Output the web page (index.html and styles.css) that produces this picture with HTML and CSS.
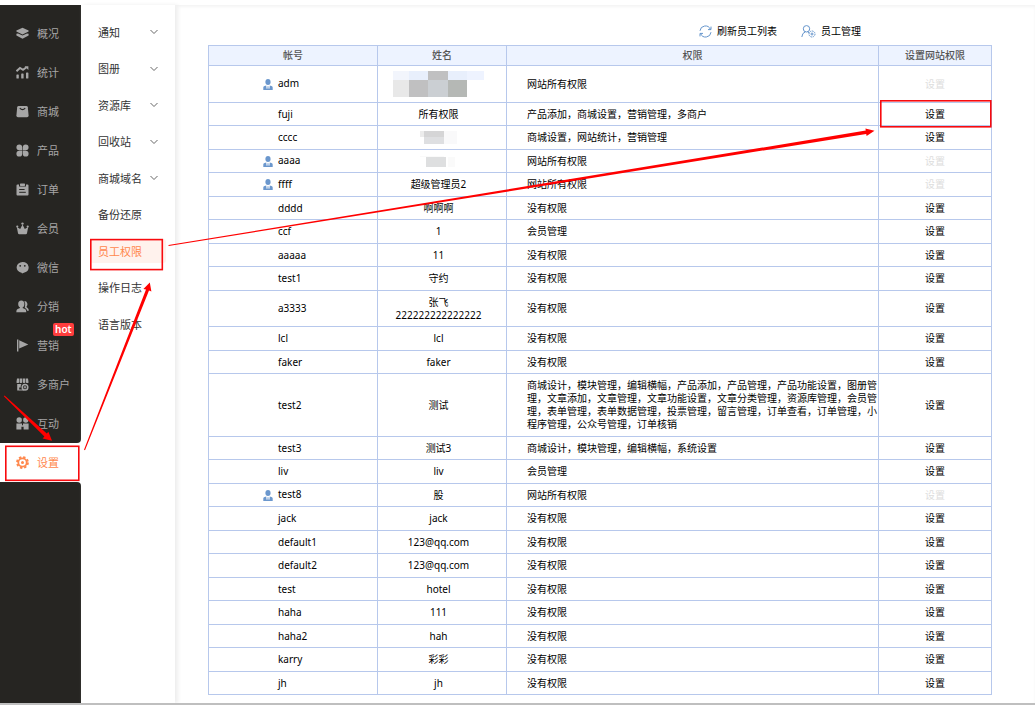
FILE: index.html
```html
<!DOCTYPE html>
<html lang="zh-CN">
<head>
<meta charset="utf-8">
<title>员工权限</title>
<link rel="stylesheet" href="styles.css">
</head>
<body>
<svg class="symbols" width="0" height="0" aria-hidden="true">
  <symbol id="staff" viewBox="0 0 10 12">
    <ellipse cx="5" cy="3" rx="2.6" ry="2.9"/>
    <path d="M0.3 11V8.4Q0.3 7.1 1.6 6.9L3.2 6.6L3.6 9.8H4.4L4.7 7H5.3L5.6 9.8H6.4L6.8 6.6L8.4 6.9Q9.7 7.1 9.7 8.4V11Z"/>
  </symbol>
  <symbol id="chevron" viewBox="0 0 8 6">
    <path d="M0.5 1L4 4.5L7.5 1" fill="none" stroke="#666" stroke-width="1"/>
  </symbol>
</svg>
<div class="top-edge"></div>
<div class="layout">
  <nav class="rail" aria-label="主菜单">
    <div class="rail-group">
      <a class="rail-item" href="#"><svg class="rail-icon" viewBox="0 0 13 13"><path d="M6.5 0.8L12.6 3.6V4.4L6.5 7.4L0.4 4.4V3.6Z"/><path d="M0.4 6.8L2 6.4L6.5 8.6L11 6.4L12.6 6.8V8.6L6.5 11.8L0.4 8.6Z"/></svg>概况</a>
      <a class="rail-item" href="#"><svg class="rail-icon" viewBox="0 0 13 13"><path d="M0.5 5.2L4 2L7 3.8L10.5 1.2" fill="none" stroke="#a6a6a6" stroke-width="1.9"/><path d="M8.6 0.3H12.4V4Z"/><rect x="0.4" y="8.4" width="2.4" height="4.2" rx="0.7"/><rect x="5.2" y="7.4" width="2.4" height="5.2" rx="0.7"/><rect x="10" y="6.4" width="2.4" height="6.2" rx="0.7"/></svg>统计</a>
      <a class="rail-item" href="#"><svg class="rail-icon" viewBox="0 0 13 13"><path d="M2.6 1H10.4Q11.6 1 11.8 2.2L12.6 10.5Q12.7 12.3 11 12.3H2Q0.3 12.3 0.4 10.5L1.2 2.2Q1.4 1 2.6 1Z"/><path d="M3.8 3.2Q6.5 6 9.2 3.2" fill="none" stroke="#262522" stroke-width="1.2"/></svg>商城</a>
      <a class="rail-item" href="#"><svg class="rail-icon" viewBox="0 0 13 13"><path d="M6.2 6.2V3.3A2.9 2.9 0 1 0 3.3 6.2ZM6.8 6.2H9.7A2.9 2.9 0 1 0 6.8 3.3ZM6.2 6.8H3.3A2.9 2.9 0 1 0 6.2 9.7ZM6.8 6.8V9.7A2.9 2.9 0 1 0 9.7 6.8Z"/></svg>产品</a>
      <a class="rail-item" href="#"><svg class="rail-icon" viewBox="0 0 13 13"><path d="M1.5 1.4H3V3.6H10V1.4H11.5Q12.5 1.4 12.5 2.4V11.5Q12.5 12.5 11.5 12.5H1.5Q0.5 12.5 0.5 11.5V2.4Q0.5 1.4 1.5 1.4Z"/><rect x="4" y="0.5" width="5" height="2.4" rx="0.6"/><path d="M3.2 6.5H8.6M3.2 9.3H9.8" stroke="#262522" stroke-width="1"/></svg>订单</a>
      <a class="rail-item" href="#"><svg class="rail-icon" viewBox="0 0 13 13"><circle cx="6.5" cy="1.6" r="1.2"/><circle cx="1.3" cy="4.6" r="1.1"/><circle cx="11.7" cy="4.6" r="1.1"/><path d="M0.8 5L4.2 7L6.5 2.4L8.8 7L12.2 5L11 11.2Q10.8 12.3 9.8 12.3H3.2Q2.2 12.3 2 11.2Z"/></svg>会员</a>
      <a class="rail-item" href="#"><svg class="rail-icon" viewBox="0 0 13 13"><path d="M6.5 0.9A6.1 5.5 0 0 1 8.5 11.6L6 12.4L5.6 11.8A6.1 5.5 0 0 1 6.5 0.9Z"/><circle cx="4.2" cy="4.8" r="0.9" fill="#262522"/><circle cx="8.8" cy="4.8" r="0.9" fill="#262522"/></svg>微信</a>
      <a class="rail-item" href="#"><svg class="rail-icon" viewBox="0 0 13 13"><ellipse cx="5.3" cy="4.1" rx="3.1" ry="3.6"/><path d="M4 6.5H6.6V8L9 9Q10.3 9.6 10.3 12.3H0.3Q0.3 9.6 1.6 9L4 8Z"/><path d="M8.4 1A3 3.4 0 0 1 10.4 7L11.6 8Q12.8 8.8 12.8 10.8H11.2Q10.8 8.7 8.8 7.8Q10 4.2 8.4 1Z"/></svg>分销</a>
      <a class="rail-item" href="#"><svg class="rail-icon" viewBox="0 0 13 13"><path d="M1 0.5H2.4V12.5H1ZM3.2 1.2L12.3 5.4L3.2 9.4Z"/></svg>营销<span class="badge">hot</span></a>
      <a class="rail-item" href="#"><svg class="rail-icon" viewBox="0 0 13 13"><path d="M1 0.5H3.2V4.5Q1.6 5.6 0.4 4.5ZM3.8 0.5H6.2V4.5Q4.9 5.6 3.7 4.5ZM6.8 0.5H9.2L9.3 4.5Q8.1 5.6 6.9 4.5ZM9.8 0.5H12L12.6 4.5Q11.4 5.6 9.9 4.5Z"/><path d="M1.2 6H5.4Q4.2 8 4.8 9.6H3.2V12.5H1.2Z"/><circle cx="9" cy="9.2" r="2.8" fill="none" stroke="#a6a6a6" stroke-width="1.5"/><path d="M7.7 9.2H10.3M9 7.9V10.5M3 12H8" stroke="#a6a6a6" stroke-width="1"/></svg>多商户</a>
      <a class="rail-item" href="#"><svg class="rail-icon" viewBox="0 0 13 13"><circle cx="3.2" cy="3" r="2.7"/><circle cx="9.8" cy="3" r="2.7"/><path d="M0.4 6.4H6V8.2H7V6.4H12.6V12.6H7.6V9.8H5.4V12.6H0.4Z"/></svg>互动</a>
    </div>
    <a class="rail-item rail-item-active" href="#" aria-current="page"><svg class="rail-icon" viewBox="0 0 13 13"><circle cx="6.5" cy="6.5" r="5.5" fill="none" stroke="#ff884d" stroke-width="1.8" stroke-dasharray="2.4 1.92"/><circle cx="6.5" cy="6.5" r="4.2" fill="none" stroke="#ff884d" stroke-width="1.8"/><circle cx="6.5" cy="6.5" r="1.5"/></svg>设置</a>
    <div class="rail-rest"></div>
  </nav>
  <aside class="side">
    <nav class="side-nav" aria-label="设置菜单">
      <a class="side-item" href="#">通知<svg class="chevron"><use href="#chevron"/></svg></a>
      <a class="side-item" href="#">图册<svg class="chevron"><use href="#chevron"/></svg></a>
      <a class="side-item" href="#">资源库<svg class="chevron"><use href="#chevron"/></svg></a>
      <a class="side-item" href="#">回收站<svg class="chevron"><use href="#chevron"/></svg></a>
      <a class="side-item" href="#">商城域名<svg class="chevron"><use href="#chevron"/></svg></a>
      <a class="side-item" href="#">备份还原</a>
      <a class="side-item side-item-active" href="#" aria-current="page">员工权限</a>
      <a class="side-item" href="#">操作日志</a>
      <a class="side-item" href="#">语言版本</a>
    </nav>
  </aside>
  <main class="main">
    <div class="toolbar">
      <button class="tool" type="button"><svg class="tool-icon" viewBox="0 0 13 13"><path d="M1 5.8A5.4 5.4 0 0 1 11.4 4.4M12 7.2A5.4 5.4 0 0 1 1.6 8.6"/><path d="M12 1.6V4.6H9M1 11.4V8.4H4"/></svg>刷新员工列表</button>
      <button class="tool" type="button"><svg class="tool-icon tool-icon-wide" viewBox="0 0 15 13"><circle cx="5.5" cy="3.8" r="3.2"/><path d="M0.8 12Q1.2 7.8 4.4 6.8M6.6 6.8L8.2 7.8"/><circle cx="11" cy="9" r="3" stroke-dasharray="1.6 0.7"/><circle cx="11" cy="9" r="1"/></svg>员工管理</button>
    </div>
    <table class="grid">
      <colgroup><col class="col-account"><col class="col-name"><col class="col-rights"><col class="col-action"></colgroup>
      <thead><tr><th>帐号</th><th>姓名</th><th>权限</th><th>设置网站权限</th></tr></thead>
      <tbody>
        <tr class="tall"><td><svg class="staff"><use href="#staff"/></svg>adm</td><td><svg class="mosaic" width="91" height="26"><path fill="#f2f5fc" d="M0 0h16v9H0z"/><path fill="#e8effc" d="M16 0h19v9H16zM55 0h19v9H55z"/><path fill="#c0c0c1" d="M35 0h20v9H35zM16 9h19v17H16z"/><path fill="#eef3ff" d="M74 0h17v9H74z"/><path fill="#e8e8e8" d="M0 9h16v17H0z"/><path fill="#cbcfd3" d="M35 9h20v17H35z"/><path fill="#b5b8b5" d="M55 9h19v17H55z"/></svg></td><td>网站所有权限</td><td><button class="set" type="button" disabled>设置</button></td></tr>
        <tr><td>fuji</td><td>所有权限</td><td>产品添加，商城设置，营销管理，多商户</td><td><button class="set" type="button">设置</button></td></tr>
        <tr><td>cccc</td><td><svg class="mosaic" width="37" height="13"><path fill="#ececec" d="M0 0h4v6H0z"/><path fill="#d5d5d6" d="M4 0h20v6H4z"/><path fill="#dedfe1" d="M4 6h20v7H4z"/><path fill="#f9f9fa" d="M24 0h13v13H24z"/></svg></td><td>商城设置，网站统计，营销管理</td><td><button class="set" type="button">设置</button></td></tr>
        <tr><td><svg class="staff"><use href="#staff"/></svg>aaaa</td><td><svg class="mosaic" width="37" height="11"><path fill="#fafafa" d="M0 0h24v1H0zM28 1h7v10h-7z"/><path fill="#dedfe0" d="M6 1h20v10H6z"/></svg></td><td>网站所有权限</td><td><button class="set" type="button" disabled>设置</button></td></tr>
        <tr><td><svg class="staff"><use href="#staff"/></svg>ffff</td><td>超级管理员2</td><td>网站所有权限</td><td><button class="set" type="button" disabled>设置</button></td></tr>
        <tr><td>dddd</td><td>啊啊啊</td><td>没有权限</td><td><button class="set" type="button">设置</button></td></tr>
        <tr><td>ccf</td><td>1</td><td>会员管理</td><td><button class="set" type="button">设置</button></td></tr>
        <tr><td>aaaaa</td><td>11</td><td>没有权限</td><td><button class="set" type="button">设置</button></td></tr>
        <tr><td>test1</td><td>守约</td><td>没有权限</td><td><button class="set" type="button">设置</button></td></tr>
        <tr><td>a3333</td><td>张飞<br>222222222222222</td><td>没有权限</td><td><button class="set" type="button">设置</button></td></tr>
        <tr><td>lcl</td><td>lcl</td><td>没有权限</td><td><button class="set" type="button">设置</button></td></tr>
        <tr><td>faker</td><td>faker</td><td>没有权限</td><td><button class="set" type="button">设置</button></td></tr>
        <tr class="roomy"><td>test2</td><td>测试</td><td>商城设计，模块管理，编辑横幅，产品添加，产品管理，产品功能设置，图册管理，文章添加，文章管理，文章功能设置，文章分类管理，资源库管理，会员管理，表单管理，表单数据管理，投票管理，留言管理，订单查看，订单管理，小程序管理，公众号管理，订单核销</td><td><button class="set" type="button">设置</button></td></tr>
        <tr><td>test3</td><td>测试3</td><td>商城设计，模块管理，编辑横幅，系统设置</td><td><button class="set" type="button">设置</button></td></tr>
        <tr><td>liv</td><td>liv</td><td>会员管理</td><td><button class="set" type="button">设置</button></td></tr>
        <tr><td><svg class="staff"><use href="#staff"/></svg>test8</td><td>股</td><td>网站所有权限</td><td><button class="set" type="button" disabled>设置</button></td></tr>
        <tr><td>jack</td><td>jack</td><td>没有权限</td><td><button class="set" type="button">设置</button></td></tr>
        <tr><td>default1</td><td>123@qq.com</td><td>没有权限</td><td><button class="set" type="button">设置</button></td></tr>
        <tr><td>default2</td><td>123@qq.com</td><td>没有权限</td><td><button class="set" type="button">设置</button></td></tr>
        <tr><td>test</td><td>hotel</td><td>没有权限</td><td><button class="set" type="button">设置</button></td></tr>
        <tr><td>haha</td><td>111</td><td>没有权限</td><td><button class="set" type="button">设置</button></td></tr>
        <tr><td>haha2</td><td>hah</td><td>没有权限</td><td><button class="set" type="button">设置</button></td></tr>
        <tr><td>karry</td><td>彩彩</td><td>没有权限</td><td><button class="set" type="button">设置</button></td></tr>
        <tr><td>jh</td><td>jh</td><td>没有权限</td><td><button class="set" type="button">设置</button></td></tr>
      </tbody>
    </table>
  </main>
</div>
<div class="bottom-edge"></div>
<!-- Step annotations drawn over the interface -->
<svg class="annotations" width="1035" height="705" viewBox="0 0 1035 705" aria-hidden="true">
  <g fill="none" stroke="#f80a0e" stroke-width="1.6">
    <rect x="5.8" y="446.3" width="73" height="34"/>
    <rect x="90.8" y="239.6" width="71.5" height="30"/>
    <rect x="880.8" y="100.8" width="110" height="26"/>
  </g>
  <g fill="#f00">
    <path d="M3.8 396.2L4.6 395.4L46.8 433.6L48.4 431.8L52 440.8L42.6 438.6L44.4 436.6Z"/>
    <path d="M84 449.8L85 450.2L149 290.6L151.4 291.4L149.8 282.5L143.4 289L146 289.4Z"/>
    <path d="M168.5 245L168.6 246L866.2 133.9L866.6 136L874.5 130.8L865.4 128.4L865.8 130.6Z"/>
  </g>
</svg>
</body>
</html>
```
FILE: styles.css
```css
* {
  box-sizing: border-box;
}

body {
  position: relative;
  display: flex;
  flex-direction: column;
  min-height: 100vh;
  margin: 0;
  background: #fff;
  color: #000;
  font: 10px/13px "Noto Sans", "Noto Sans CJK SC", sans-serif;
}

a {
  color: inherit;
  text-decoration: none;
}

button {
  padding: 0;
  border: 0;
  background: none;
  color: inherit;
  font: inherit;
  cursor: pointer;
}

.symbols {
  position: absolute;
}

.top-edge {
  height: 5px;
  background: #fff;
}

.bottom-edge {
  height: 2px;
  background: #bfbfbf;
}

.layout {
  display: flex;
  flex: 1;
  box-shadow: inset 0 2px 3px #f4f4f4;
}

/* Dark main menu */
.rail {
  display: flex;
  flex: 0 0 81px;
  flex-direction: column;
  background: #fff;
  color: #a6a6a6;
  font-size: 11px;
}

.rail-group {
  padding-top: 9px;
  border-bottom-right-radius: 4px;
  background: #262522;
}

.rail-item {
  position: relative;
  display: flex;
  align-items: center;
  gap: 8px;
  height: 39px;
  padding-left: 16px;
}

.rail-item-active {
  color: #ff884d;
}

.rail-icon {
  width: 13px;
  height: 13px;
  fill: currentColor;
}

.rail-rest {
  flex: 1;
  border-top-right-radius: 4px;
  background: #262522;
}

.badge {
  position: absolute;
  top: -3px;
  left: 53px;
  padding: 0 2px;
  border-radius: 2px;
  background: #ff3d3d;
  color: #fff;
  font-size: 10px;
  font-weight: 600;
}

/* Settings menu */
.side {
  flex: 0 0 94px;
  padding: 15px 9px;
  background: #fff;
  box-shadow: 3px 0 4px #eee;
}

.side-nav {
  display: flex;
  flex-direction: column;
  justify-content: space-between;
  width: 76px;
  min-height: 316px;
}

.side-item {
  display: flex;
  align-items: center;
  justify-content: space-between;
  height: 24px;
  padding: 0 8px;
  border-radius: 3px;
  color: #333;
  font-size: 11px;
}

.side-item-active {
  background: #fff2ed;
  color: #ff884d;
}

.chevron {
  width: 8px;
  height: 6px;
}

/* Staff list */
.main {
  flex: 1;
  padding: 17px 43px 8px 33px;
}

.toolbar {
  display: flex;
  justify-content: flex-end;
  gap: 24px;
  height: 23px;
  padding-right: 131px;
}

.tool {
  display: flex;
  align-items: center;
  gap: 5px;
  height: 18px;
}

.tool-icon {
  width: 13px;
  height: 13px;
  fill: none;
  stroke: #6595cc;
  stroke-width: 1;
}

.tool-icon-wide {
  width: 15px;
}

.grid {
  width: 100%;
  border-collapse: collapse;
  table-layout: fixed;
}

.col-account {
  width: 169px;
}

.col-name {
  width: 129px;
}

.col-action {
  width: 113px;
}

.grid th,
.grid td {
  padding: 0;
  border: 1px solid #b7c8ec;
}

.grid th {
  height: 20px;
  background: #edf3ff;
  color: #555;
  font-weight: 500;
}

.grid td {
  height: 24px;
  text-align: center;
}

.grid tr:nth-child(even) td {
  height: 23px;
}

.grid .tall td {
  height: 37px;
}

.grid td:nth-child(1) {
  padding-left: 69px;
  text-align: left;
}

.grid td:nth-child(2) {
  padding: 4px 7px 4px 0;
}

.grid td:nth-child(3) {
  padding-left: 20px;
  text-align: left;
}

.grid tr:nth-child(10) td {
  height: 36px;
}

.grid .roomy td {
  padding-top: 5px;
  padding-bottom: 5px;
}

.staff {
  width: 10px;
  height: 12px;
  margin: 0 5px 0 -15px;
  fill: #6b97cd;
  vertical-align: middle;
}

.mosaic {
  display: block;
  margin: 0 auto;
}

.set:disabled {
  color: #ddd;
  cursor: default;
}

.annotations {
  position: absolute;
  top: 0;
  left: 0;
  pointer-events: none;
}
```
